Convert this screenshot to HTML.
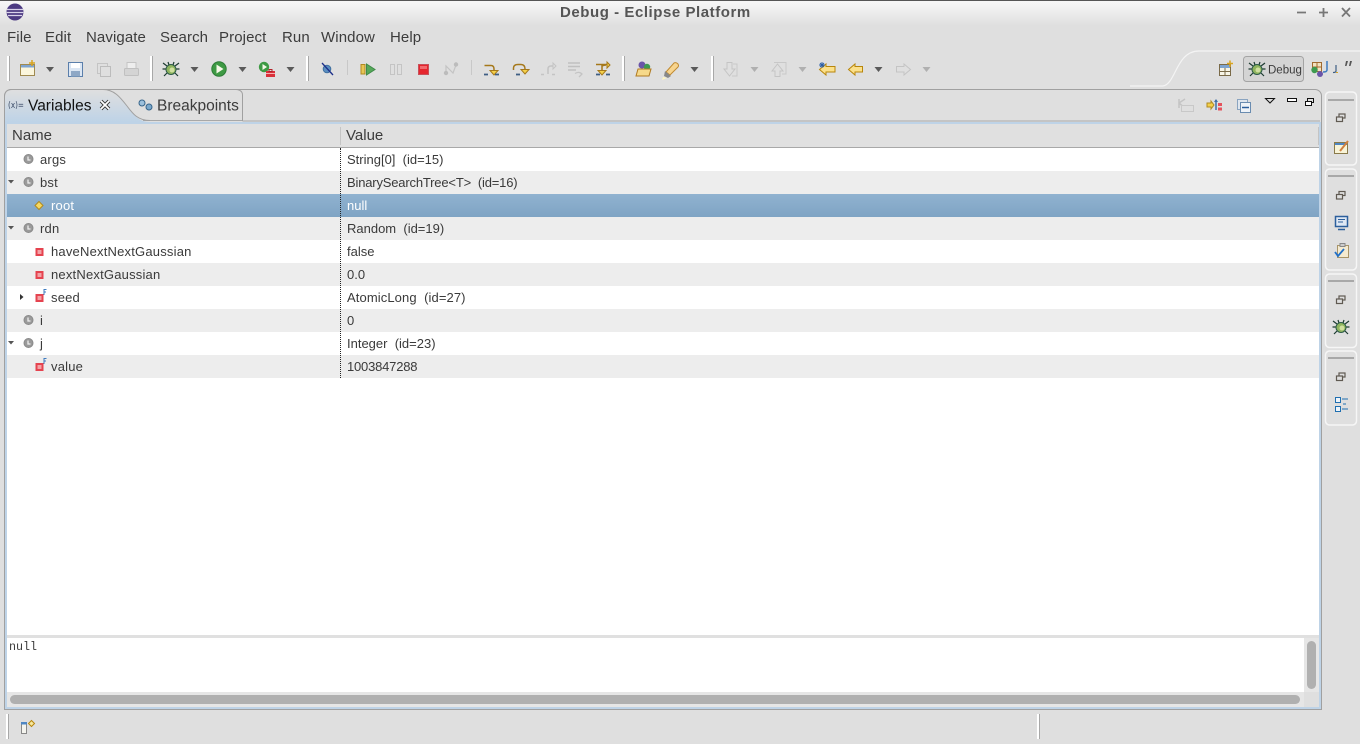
<!DOCTYPE html>
<html><head><meta charset="utf-8"><title>Debug - Eclipse Platform</title>
<style>
html,body{margin:0;padding:0;width:1360px;height:744px;overflow:hidden;background:#dfdfdf}
body{position:relative;font-family:"Liberation Sans","DejaVu Sans",sans-serif;color:#3c3c3c}
.a{position:absolute;white-space:pre}
.m{top:29px;font-size:15px;letter-spacing:.1px;line-height:18px;color:#3c3c3c}
.r{position:absolute;left:7px;width:1312px;height:23px}
.t{position:absolute;font-size:13px;line-height:23px;white-space:pre;color:#3a3a3a}
.n{letter-spacing:.2px}
svg{position:absolute;left:0;top:0}
</style></head><body>
<div class="a" style="left:0;top:0;width:1360px;height:26px;background:linear-gradient(#f8f8f8,#dfdfdf)"></div>
<div class="a" style="left:0;top:0;width:1360px;height:1px;background:#555"></div>
<div class="a" style="left:560px;top:4px;font-size:15px;letter-spacing:.55px;line-height:18px;font-weight:bold;color:#555">Debug - Eclipse Platform</div>
<div class="a m" style="left:7px">File</div>
<div class="a m" style="left:45px">Edit</div>
<div class="a m" style="left:86px">Navigate</div>
<div class="a m" style="left:160px">Search</div>
<div class="a m" style="left:219px">Project</div>
<div class="a m" style="left:282px">Run</div>
<div class="a m" style="left:321px">Window</div>
<div class="a m" style="left:390px">Help</div>

<div class="a" style="left:4px;top:89px;width:1316px;height:619px;border:1px solid #a0a0a0;border-radius:7px 7px 0 0;background:#dfdfdf"></div>
<div class="a" style="left:5px;top:122px;width:1316px;height:587px;background:#bed3e7"></div>
<div class="a" style="left:7px;top:124px;width:1312px;height:583px;background:#fff"></div>
<div class="a" style="left:7px;top:124px;width:1312px;height:23px;background:#e0e0e0;border-bottom:1px solid #a8a8a8"></div>
<div class="a" style="left:340px;top:127px;width:1px;height:18px;background:#c4c4c4"></div>
<div class="a" style="left:1318px;top:127px;width:1px;height:18px;background:#c4c4c4"></div>
<div class="t" style="left:12px;top:124px;font-size:15px;color:#3c3c3c">Name</div>
<div class="t" style="left:346px;top:124px;font-size:15px;color:#3c3c3c">Value</div>

<div class="r" style="top:171px;background:#ededed"></div>
<div class="r" style="top:194px;background:linear-gradient(#90b2d0,#7fa4c4)"></div>
<div class="r" style="top:217px;background:#ededed"></div>
<div class="r" style="top:263px;background:#ededed"></div>
<div class="r" style="top:309px;background:#ededed"></div>
<div class="r" style="top:355px;background:#ededed"></div>
<div class="a" style="left:340px;top:148px;width:0;height:230px;border-left:1px dotted #222"></div>

<div class="t n" style="left:40px;top:148px">args</div><div class="t" style="left:347px;top:148px">String[0]  (id=15)</div>
<div class="t n" style="left:40px;top:171px">bst</div><div class="t" style="left:347px;top:171px;letter-spacing:-.18px">BinarySearchTree&lt;T&gt;  (id=16)</div>
<div class="t n" style="left:51px;top:194px;color:#fff">root</div><div class="t" style="left:347px;top:194px;color:#fff">null</div>
<div class="t n" style="left:40px;top:217px">rdn</div><div class="t" style="left:347px;top:217px">Random  (id=19)</div>
<div class="t n" style="left:51px;top:240px">haveNextNextGaussian</div><div class="t" style="left:347px;top:240px">false</div>
<div class="t n" style="left:51px;top:263px">nextNextGaussian</div><div class="t" style="left:347px;top:263px">0.0</div>
<div class="t n" style="left:51px;top:286px">seed</div><div class="t" style="left:347px;top:286px;letter-spacing:.1px">AtomicLong  (id=27)</div>
<div class="t n" style="left:40px;top:309px">i</div><div class="t" style="left:347px;top:309px">0</div>
<div class="t n" style="left:40px;top:332px">j</div><div class="t" style="left:347px;top:332px">Integer  (id=23)</div>
<div class="t n" style="left:51px;top:355px">value</div><div class="t" style="left:347px;top:355px;letter-spacing:-.2px">1003847288</div>

<div class="a" style="left:7px;top:635px;width:1312px;height:3px;background:#e0e0e0"></div>
<div class="a" style="left:9px;top:640px;font-family:'Liberation Mono',monospace;font-size:11.7px;line-height:14px;color:#3c3c3c">null</div>
<div class="a" style="left:7px;top:692px;width:1312px;height:15px;background:#e6e6e6"></div>
<div class="a" style="left:1304px;top:638px;width:15px;height:69px;background:#e6e6e6"></div>
<div class="a" style="left:1304px;top:692px;width:15px;height:15px;background:#dfdfdf"></div>
<div class="a" style="left:10px;top:695px;width:1290px;height:9px;border-radius:5px;background:#b0b0b0"></div>
<div class="a" style="left:1307px;top:641px;width:9px;height:48px;border-radius:5px;background:#b0b0b0"></div>

<svg width="1360" height="744" viewBox="0 0 1360 744" xmlns="http://www.w3.org/2000/svg">
<defs>
<linearGradient id="tabg" x1="0" y1="0" x2="0" y2="1"><stop offset="0" stop-color="#dfdfdf"/><stop offset="1" stop-color="#bed3e7"/></linearGradient>
<g id="da"><path d="M-4 -2.500H4L0 2.500Z" fill="#5a5a5a"/></g>
<g id="dd"><path d="M-4 -2.500H4L0 2.500Z" fill="#b0b0b0"/></g>
<g id="grip"><rect x="0" y="0" width="2" height="25" fill="#fff"/><rect x="2" y="0" width="1" height="25" fill="#a8a8a8"/></g>
<g id="bug"><path d="M-8 -6L-4 -3M8 -6L4 -3M-8.500 0H-5M8.500 0H5M-7 7L-4 4M7 7L4 4M-3 -7L-2 -4M3 -7L2 -4" stroke="#1e3c32" stroke-width="1.200" fill="none"/><ellipse cx="0" cy="0.500" rx="5" ry="5" fill="#8fb55f" stroke="#2c5a48"/><ellipse cx="1" cy="1" rx="2.500" ry="2.500" fill="#d0e0a0"/></g>
<g id="loc"><circle r="4.500" fill="#9a9a9a" stroke="#8a8a8a"/><path d="M-0.500 -2.500V1H2" stroke="#eee" stroke-width="1.300" fill="none"/></g>
<g id="fld"><rect x="-4" y="-4" width="8" height="8" fill="#e5434f"/><rect x="-2" y="-2" width="4" height="4" fill="#f3a2a6"/></g>
<g id="rest"><rect x="-2" y="-4" width="6" height="4" fill="#dfdfdf" stroke="#605a52" stroke-width="1.200"/><rect x="-4.500" y="-1" width="6" height="4.500" fill="#dfdfdf" stroke="#605a52" stroke-width="1.200"/></g>
</defs>

<!-- eclipse logo -->
<circle cx="15" cy="12" r="8.500" fill="#4c3a82"/>
<path d="M7 9.500H23M6.700 12.500H23.300M8 15.500H22" stroke="#d9d2ea" stroke-width="1.200"/>

<!-- window controls -->
<path d="M1297 12.500H1306M1319 12.500H1328M1323.500 8V17" stroke="#777" stroke-width="1.800"/>
<path d="M1342 8L1350 16.500M1350 8L1342 16.500" stroke="#777" stroke-width="1.800"/>

<!-- perspective curve -->
<path d="M1130 86H1163C1176 84 1176 51 1199 51H1360" fill="none" stroke="#f4f4f4" stroke-width="1.200"/>

<!-- toolbar grips -->
<use href="#grip" x="7" y="56"/><use href="#grip" x="150" y="56"/><use href="#grip" x="306" y="56"/>
<use href="#grip" x="622" y="56"/><use href="#grip" x="711" y="56"/>
<rect x="347" y="60" width="1" height="15" fill="#c8c8c8"/><rect x="471" y="60" width="1" height="15" fill="#c8c8c8"/>

<!-- new -->
<rect x="20.500" y="64.500" width="14" height="11" fill="#fbf6dd" stroke="#a08a50"/><rect x="21" y="65" width="13" height="2.500" fill="#7ea4d0"/>
<path d="M32 60V66M29 63H35" stroke="#d9a520" stroke-width="1.500"/>
<use href="#da" x="50" y="69.500"/>
<!-- save -->
<rect x="68.500" y="62.500" width="14" height="14" fill="#dbe6f3" stroke="#5b7fab"/><rect x="71" y="63" width="9" height="5" fill="#fff"/><rect x="71" y="71" width="9" height="5.500" fill="#8ea8c6"/>
<!-- save all dis -->
<rect x="97.500" y="63.500" width="10" height="10" fill="none" stroke="#c4c4c4"/><rect x="100.500" y="66.500" width="10" height="10" fill="#dfdfdf" stroke="#bcbcbc"/>
<!-- print dis -->
<rect x="127" y="62.500" width="9" height="6" fill="#eee" stroke="#c4c4c4"/><rect x="124.500" y="68.500" width="14" height="7" rx="1" fill="#d4d4d4" stroke="#c0c0c0"/>
<!-- debug -->
<use href="#bug" x="171" y="69"/><use href="#da" x="194.500" y="69.500"/>
<!-- run -->
<circle cx="219" cy="69" r="7.200" fill="#3e9a44" stroke="#2d7c36"/><path d="M216.500 64.500L223.500 69L216.500 73.500Z" fill="#f6f9e8"/>
<use href="#da" x="242.500" y="69.500"/>
<!-- ext tools -->
<circle cx="264" cy="67" r="5.200" fill="#3e9a44"/><path d="M262.500 64L267 67L262.500 70Z" fill="#f6f9e8"/>
<rect x="266" y="71" width="9" height="6" fill="#d9303a"/><rect x="269" y="69.500" width="3" height="2" fill="none" stroke="#b02028"/><path d="M266 73.500H275" stroke="#f5b0b0"/>
<use href="#da" x="290.500" y="69.500"/>
<!-- skip breakpoints -->
<circle cx="327" cy="69" r="3.800" fill="#5a8ec0" stroke="#3f6f9f"/><path d="M322 63L333 75" stroke="#1c2f8a" stroke-width="1.300"/>
<!-- resume -->
<rect x="361" y="64.500" width="4" height="9.500" fill="#e7c555" stroke="#b08a20"/><path d="M366.500 64L375 69.500L366.500 75Z" fill="#56a85a" stroke="#3f8a48"/>
<!-- suspend dis -->
<rect x="390.500" y="64.500" width="4" height="10" fill="#dfdfdf" stroke="#c4c4c4"/><rect x="397.500" y="64.500" width="4" height="10" fill="#dfdfdf" stroke="#c4c4c4"/>
<!-- terminate -->
<rect x="418.500" y="64.500" width="10" height="10" fill="#e5262e" stroke="#c8505a"/><rect x="420" y="66" width="7" height="3" fill="#f26a6e"/>
<!-- disconnect -->
<path d="M446 73V66L453 73L456 65" fill="none" stroke="#c4c4c4" stroke-width="1.200"/><circle cx="446" cy="73" r="2.200" fill="#bcbcbc"/><circle cx="456" cy="64.500" r="2.200" fill="#bcbcbc"/>
<!-- step into -->
<path d="M484.500 65.500H491Q494 65.500 494 69V71" fill="none" stroke="#a5781a" stroke-width="1.500"/><path d="M490 70.500H498L494 75Z" fill="#f4d04a" stroke="#a5781a"/><path d="M484 74.500H488M495 74.500H499" stroke="#3f5e84" stroke-width="1.800"/>
<!-- step over -->
<path d="M513.500 70V68Q513.500 64.500 518 64.500H521Q525 64.500 525 69V70" fill="none" stroke="#a5781a" stroke-width="1.500"/><path d="M521 69.500H529L525 74Z" fill="#f4d04a" stroke="#a5781a"/><path d="M516 74.500H520" stroke="#3f5e84" stroke-width="1.800"/>
<!-- step return dis -->
<path d="M548 74V69Q548 66 551 66H553" fill="none" stroke="#c4c4c4" stroke-width="1.500"/><path d="M553 63L556 66L553 69Z" fill="#dfdfdf" stroke="#c4c4c4"/><path d="M541 74.500H544M552 74.500H555" stroke="#c4c4c4" stroke-width="1.500"/>
<!-- drop to frame dis -->
<path d="M568 63H580M568 66.500H580M568 70H576" stroke="#c0c0c0" stroke-width="1.500"/><path d="M575 73.500Q579 71 582 74L579 77" fill="none" stroke="#c4c4c4" stroke-width="1.300"/>
<!-- step filters -->
<path d="M596 64.500H607M602 64.500V71M602 66Q604 65 606 65" fill="none" stroke="#a5781a" stroke-width="1.500"/><path d="M607 62L610 65L607 68Z" fill="#f4d04a" stroke="#a5781a"/><path d="M598 70.500H606L602 75Z" fill="#f4d04a" stroke="#a5781a"/><path d="M596 74.500H600M606 74.500H610" stroke="#3f5e84" stroke-width="1.800"/>
<!-- open -->
<circle cx="642" cy="65" r="3.500" fill="#6a55a8"/><circle cx="647" cy="67" r="3.200" fill="#3e9a50"/>
<path d="M636 76L638 69H651L649 76Z" fill="#f6d98a" stroke="#b07a20"/>
<!-- pen -->
<path d="M666 72L674 63Q676 62 678 64Q679 66 678 67L670 75Z" fill="#f7d48e" stroke="#c08a30"/><path d="M665 71L671 76L668 78L664 76Z" fill="#888"/><path d="M663 77L667 78L662 80Z" fill="#fff6c0"/>
<use href="#da" x="694.500" y="69.500"/>
<!-- next annot -->
<path d="M727 62.500H732V69H735L729.500 76L724 69H727Z" fill="#dfdfdf" stroke="#c4c4c4"/><path d="M733 64H737V76H732" fill="none" stroke="#c8c8c8"/>
<use href="#dd" x="754.500" y="69.500"/>
<path d="M775 76.500H780V71H783L777.500 64L772 71H775Z" fill="#dfdfdf" stroke="#c4c4c4"/><path d="M774 62.500H786V74H782" fill="none" stroke="#c8c8c8"/>
<use href="#dd" x="802.500" y="69.500"/>
<!-- last edit -->
<path d="M826 64V66.500H835V72H826V75L819.500 69.500Z" fill="#fbe08a" stroke="#b8860b"/><path d="M820 63L824 67M824 63L820 67M822 62V68M819 65H825" stroke="#2b5fa8" stroke-width="0.900"/>
<!-- back -->
<path d="M855 64V66.500H862.500V72H855V75L848.500 69.500Z" fill="#fbe08a" stroke="#b8860b"/>
<use href="#da" x="878.500" y="69.500"/>
<!-- forward -->
<path d="M904 64V66.500H896.500V72H904V75L910.500 69.500Z" fill="#dfdfdf" stroke="#c4c4c4"/>
<use href="#dd" x="926.500" y="69.500"/>

<!-- perspective -->
<rect x="1219.500" y="64.500" width="11" height="11" fill="#f8f6e8" stroke="#7a6a48"/><rect x="1220" y="65" width="10" height="3" fill="#7ea4d0"/><path d="M1225 68V75M1220 71.500H1230" stroke="#7a6a48"/><path d="M1230 60.500V67M1227 63.500H1233" stroke="#d9a520" stroke-width="1.500"/>
<rect x="1243.500" y="56.500" width="60" height="25" rx="3" fill="#d4d4d4" stroke="#a4a4a4"/>
<use href="#bug" x="1257" y="69"/>
<text x="1268" y="73.500" font-family="Liberation Sans, sans-serif" font-size="11.500" fill="#3c3c3c">Debug</text>
<rect x="1312.500" y="62.500" width="9" height="9" fill="#f3e2c0" stroke="#a06a30"/><path d="M1317 62V72M1312 67H1322" stroke="#a06a30"/><circle cx="1314.500" cy="70" r="3.200" fill="#3e9a50"/><circle cx="1320" cy="74" r="3" fill="#6a55a8"/>
<path d="M1327 61V70Q1327 72 1323 72" fill="none" stroke="#3f7cc0" stroke-width="1.500"/>
<path d="M1336 65V71Q1336 72.500 1333 72.500" fill="none" stroke="#3f5e84" stroke-width="1.200"/><path d="M1338 72.500H1336" stroke="#d9a520"/>
<path d="M1346 61H1348L1346.500 66H1345ZM1350 61H1352L1350.500 66H1349Z" fill="#555"/>

<!-- tabs -->
<path d="M143 120.500H242.500M1320 121H242.500" stroke="#a8a8a8"/>
<path d="M4.500 122V97Q4.500 89.500 12 89.500H103C114 89.500 120 97 127 106C135 116 139 122 150 122Z" fill="url(#tabg)"/>
<path d="M4.500 122V97Q4.500 89.500 12 89.500H103C114 89.500 120 97 127 106C133 114 138 120.500 150 120.500" fill="none" stroke="#a0a0a0"/>
<path d="M242.500 121V95Q242.500 90 236 89.500" fill="none" stroke="#a0a0a0"/>
<text x="28" y="110.500" font-family="Liberation Sans, sans-serif" font-size="15.500" fill="#111">Variables</text>
<text x="157" y="110.500" font-family="Liberation Sans, sans-serif" font-size="15.500" fill="#3c3c3c">Breakpoints</text>
<text x="8" y="108" font-family="DejaVu Sans, sans-serif" font-size="9" textLength="16" lengthAdjust="spacingAndGlyphs" fill="#3a4a66">(x)=</text>
<path d="M101 101L109 109M109 101L101 109" stroke="#333" stroke-width="3.600"/><path d="M101 101L109 109M109 101L101 109" stroke="#fff" stroke-width="1.800"/>
<circle cx="142" cy="103" r="3" fill="#9cc0dc" stroke="#36648a"/><circle cx="149" cy="107" r="3" fill="#7aa8cc" stroke="#36648a"/>

<!-- view toolbar -->
<path d="M1179 99V108M1179 103L1185 99M1179 103L1186 109" stroke="#c4c4c4" fill="none" stroke-width="1.500"/><rect x="1181.500" y="105.500" width="12" height="6" fill="#dfdfdf" stroke="#c8c8c8"/>
<path d="M1207 103H1211V101L1214 105L1211 109V107H1207Z" fill="#f4d04a" stroke="#b08a20"/><path d="M1216 100V110" stroke="#3f6fa8" stroke-width="1.500"/><path d="M1214 102L1216 99L1218 102Z" fill="#3f6fa8"/><rect x="1218" y="103" width="4" height="3" fill="#e5535c"/><rect x="1218" y="107.500" width="4" height="3" fill="#e5535c"/>
<rect x="1237.500" y="99.500" width="10" height="10" fill="#dfe6ee" stroke="#8aa4c0"/><rect x="1240.500" y="102.500" width="10" height="10" fill="#eef3f8" stroke="#6a8cb0"/><path d="M1242 107.500H1249" stroke="#2c5f9c" stroke-width="1.500"/>
<path d="M1265.500 98.500H1274.500L1270 103Z" fill="#dfdfdf" stroke="#111"/>
<rect x="1287.500" y="98.500" width="9" height="3" fill="#fff" stroke="#111"/>
<rect x="1307.500" y="98.500" width="6" height="4" fill="#dfdfdf" stroke="#111"/><rect x="1305.500" y="101.500" width="6" height="4" fill="#fff" stroke="#111"/>

<!-- tree arrows -->
<path d="M8 180H14L11 183.500Z M8 226H14L11 229.500Z M8 341H14L11 344.500Z" fill="#555"/>
<path d="M20 294V300L23.500 297Z" fill="#333"/>
<use href="#loc" x="28.500" y="159"/><use href="#loc" x="28.500" y="182"/><use href="#loc" x="28.500" y="228"/><use href="#loc" x="28.500" y="320"/><use href="#loc" x="28.500" y="343"/>
<path d="M39 201.500L43 205.500L39 209.500L35 205.500Z" fill="#f6d860" stroke="#b08a20"/>
<use href="#fld" x="39.500" y="252"/><use href="#fld" x="39.500" y="275"/><use href="#fld" x="39.500" y="298"/><use href="#fld" x="39.500" y="367"/>
<path d="M44 295V289.500H46.500M44 292H46M44 364V358.500H46.500M44 361H46" fill="none" stroke="#3f7cc0"/>

<!-- trim -->
<g fill="#dfdfdf" stroke="#f6f6f6" stroke-width="1.500">
<rect x="1325.500" y="92" width="31" height="73" rx="4"/><rect x="1325.500" y="169" width="31" height="101" rx="4"/><rect x="1325.500" y="274" width="31" height="73.500" rx="4"/><rect x="1325.500" y="351" width="31" height="74" rx="4"/>
</g>
<g fill="#a8a8a8"><rect x="1328" y="99" width="26" height="2"/><rect x="1328" y="175" width="26" height="2"/><rect x="1328" y="280" width="26" height="2"/><rect x="1328" y="357" width="26" height="2"/></g>
<use href="#rest" x="1341" y="118"/><use href="#rest" x="1341" y="195.500"/><use href="#rest" x="1341" y="300"/><use href="#rest" x="1341" y="377"/>
<rect x="1334.500" y="142.500" width="13" height="11" fill="#f8f4d8" stroke="#8a7a4a"/><rect x="1335" y="143" width="12" height="2" fill="#4f87c4"/><path d="M1340 151L1348 141" stroke="#d08040" stroke-width="2"/>
<rect x="1335.500" y="216.500" width="12" height="10" fill="#dfe8f4" stroke="#2c5f9c" stroke-width="1.500"/><path d="M1338 219.500H1345M1338 222H1343" stroke="#2c5f9c"/><path d="M1338 229.500H1345" stroke="#2c5f9c" stroke-width="1.500"/>
<rect x="1337.500" y="245.500" width="11" height="12" fill="#f4ead0" stroke="#a89468"/><rect x="1340" y="243.500" width="5" height="3" fill="#ccc" stroke="#888"/><path d="M1335 252L1338 256L1344 249" fill="none" stroke="#1f6fc8" stroke-width="1.800"/>
<use href="#bug" x="1341" y="327"/>
<rect x="1335.500" y="397.500" width="5" height="5" fill="#eef4fa" stroke="#1f6fb0"/><rect x="1335.500" y="406.500" width="5" height="5" fill="#eef4fa" stroke="#1f6fb0"/><path d="M1342 399H1348M1343 404H1346M1342 409H1348" stroke="#1f6fb0"/>

<!-- status -->
<use href="#grip" x="6" y="714"/>
<rect x="1037" y="714" width="2" height="25" fill="#fff"/><rect x="1039" y="714" width="1" height="25" fill="#a8a8a8"/>
<rect x="21.500" y="722.500" width="5" height="11" fill="#f4f4ee" stroke="#888"/><rect x="21" y="722" width="6" height="2.500" fill="#4f87c4"/>
<path d="M31.500 720.500L34.500 723.500L31.500 726.500L28.500 723.500Z" fill="#f6e8a0" stroke="#b8860b"/>
</svg>
</body></html>
